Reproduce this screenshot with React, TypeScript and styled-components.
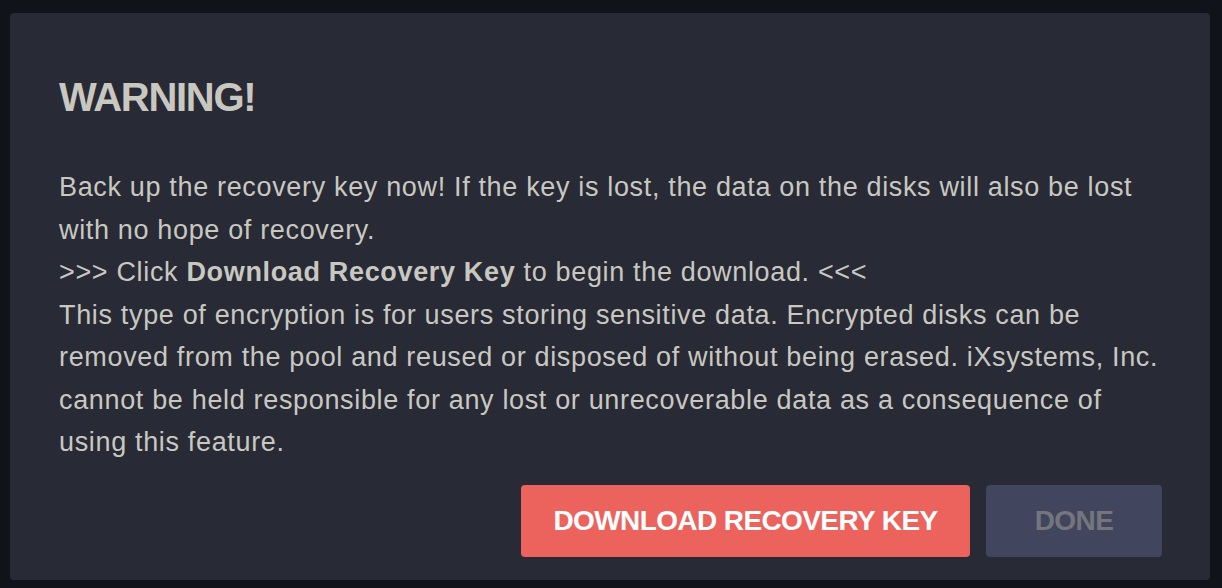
import styled, { createGlobalStyle } from "styled-components";

const GlobalStyle = createGlobalStyle`
  html, body {
    margin: 0;
    padding: 0;
    background: #11131a;
  }
  body {
    font-family: "Liberation Sans", Arial, Helvetica, sans-serif;
  }
`;

const Backdrop = styled.div`
  width: 1222px;
  height: 588px;
  box-sizing: border-box;
  padding: 13px 12px 8px 10px;
`;

const Dialog = styled.div`
  width: 1200px;
  height: 567px;
  box-sizing: border-box;
  background: #282a35;
  border-radius: 4px;
  padding: 61px 48px 23px 49px;
  display: flex;
  flex-direction: column;
`;

const Title = styled.h1`
  margin: 0;
  font-size: 40px;
  line-height: 46px;
  font-weight: 700;
  letter-spacing: -1.3px;
  color: #c8c8c1;
`;

const Message = styled.div`
  margin-top: 46px;
  font-size: 27px;
  line-height: 42.5px;
  letter-spacing: 0.66px;
  color: #c8c8c1;

  b {
    font-weight: 700;
  }
`;

const Actions = styled.div`
  margin-top: auto;
  display: flex;
  justify-content: flex-end;
  gap: 16px;
`;

const Button = styled.button<{ $primary?: boolean }>`
  height: 72px;
  padding: 0;
  width: ${(p) => (p.$primary ? "449px" : "176px")};
  border: none;
  border-radius: 4px;
  font-family: "Liberation Sans", Arial, sans-serif;
  font-size: 28px;
  font-weight: 700;
  letter-spacing: -0.6px;
  background: ${(p) => (p.$primary ? "#ec635e" : "#41455e")};
  color: ${(p) => (p.$primary ? "#ffffff" : "#75767d")};
  cursor: ${(p) => (p.$primary ? "pointer" : "default")};
`;

export default function App() {
  return (
    <>
      <GlobalStyle />
      <Backdrop>
        <Dialog>
          <Title>WARNING!</Title>
          <Message>
            Back up the recovery key now! If the key is lost, the data on the
            disks will also be lost with no hope of recovery.
            <br />
            &gt;&gt;&gt; Click <b>Download Recovery Key</b> to begin the
            download. &lt;&lt;&lt;
            <br />
            This type of encryption is for users storing sensitive data.
            Encrypted disks can be removed from the pool and reused or disposed
            of without being erased. iXsystems, Inc. cannot be held responsible
            for any lost or unrecoverable data as a consequence of using this
            feature.
          </Message>
          <Actions>
            <Button $primary>DOWNLOAD RECOVERY KEY</Button>
            <Button disabled>DONE</Button>
          </Actions>
        </Dialog>
      </Backdrop>
    </>
  );
}
